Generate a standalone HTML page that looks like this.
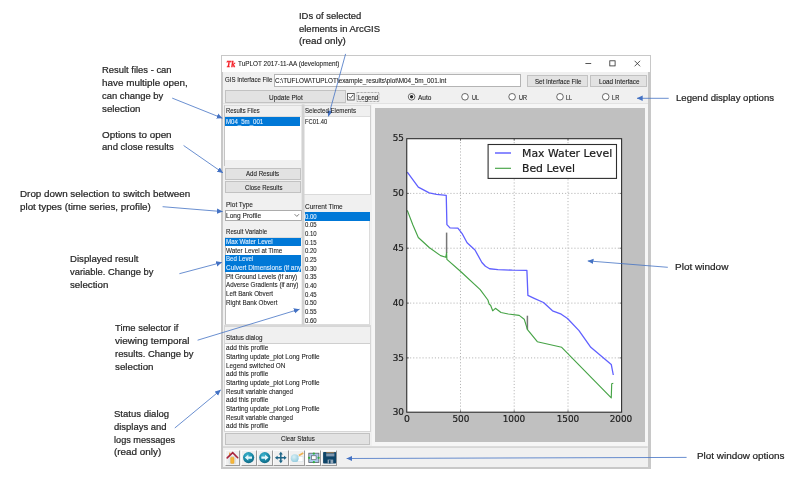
<!DOCTYPE html>
<html lang="en">
<head>
<meta charset="utf-8">
<title>TuPLOT interface overview</title>
<style>
html,body{margin:0;padding:0;background:#fff;}
body{width:800px;height:480px;position:relative;overflow:hidden;font-family:'Liberation Sans',sans-serif;}
.b{position:absolute;box-sizing:border-box;}
.t{position:absolute;white-space:nowrap;transform-origin:0 50%;}
.btn{background:#e2e2e2;border:1px solid #c2c2c2;}
.white{background:#fff;}
.sel{background:#0078d7;}
.tb{background:#f0f0f0;border-top:1px solid #fbfbfb;border-left:1px solid #fbfbfb;border-right:1px solid #999;border-bottom:1px solid #999;}
svg{position:absolute;left:0;top:0;overflow:visible;}
</style>
</head>
<body>
<div id="stage" style="position:absolute;left:0;top:0;width:800px;height:480px;will-change:transform;">
<!-- window frame -->
<div class="b" style="left:221.2px;top:55.2px;width:429.4px;height:413.4px;background:#c8c8c8;"></div>
<div class="b" style="left:222px;top:56px;width:427.8px;height:16.2px;background:#fff;"></div>
<div class="b" style="left:223px;top:72.2px;width:424.7px;height:394.4px;background:#f0f0f0;"></div>

<!-- row 1 -->
<div class="b white" style="left:273.6px;top:74.3px;width:247.4px;height:13px;border:1px solid #b4b4b4;"></div>
<div class="b btn" style="left:527px;top:75px;width:61px;height:12px;"></div>
<div class="b btn" style="left:590px;top:75px;width:57px;height:12px;"></div>
<!-- row 2 -->
<div class="b btn" style="left:224.5px;top:90.4px;width:121px;height:13px;"></div>
<div class="b" style="left:223px;top:103.4px;width:424.7px;height:1px;background:#e2e2e2;"></div>

<!-- left panels -->
<div class="b" style="left:224.4px;top:105.2px;width:77.2px;height:61px;border:1px solid #dadada;border-right:none;border-left-color:#c4c4c4;border-bottom:none;"></div>
<div class="b white" style="left:225px;top:116.2px;width:75.8px;height:44px;border-top:1px solid #dcdcdc;"></div>
<div class="b sel" style="left:225px;top:117px;width:75px;height:8.6px;"></div>
<div class="b" style="left:304px;top:105.2px;width:66.8px;height:89.6px;border:1px solid #dadada;border-left:none;border-right-color:#cfcfcf;"></div>
<div class="b white" style="left:304px;top:116.2px;width:65.8px;height:78px;border-top:1px solid #dcdcdc;"></div>
<div class="b btn" style="left:225px;top:167.5px;width:76.2px;height:12px;"></div>
<div class="b btn" style="left:225px;top:181.2px;width:76.2px;height:12px;"></div>
<!-- combobox -->
<div class="b white" style="left:224.5px;top:210px;width:77px;height:10.6px;border:1px solid #acacac;"></div>
<!-- result variable list -->
<div class="b white" style="left:224.5px;top:237.3px;width:77.5px;height:87.6px;border:1px solid #dcdcdc;border-left-color:#bdbdbd;border-right:none;"></div>
<div class="b sel" style="left:225.2px;top:237.5px;width:75.4px;height:8.6px;"></div>
<div class="b sel" style="left:225.2px;top:254.8px;width:75.4px;height:17.3px;"></div>
<!-- time list -->
<div class="b white" style="left:304px;top:211.6px;width:66.4px;height:113px;border:1px solid #dcdcdc;border-left:none;"></div>
<div class="b sel" style="left:304.6px;top:212px;width:65px;height:8.6px;"></div>
<div class="b" style="left:224.4px;top:324.6px;width:146.4px;height:1.9px;background:#d8d8d8;"></div>
<!-- status -->
<div class="b" style="left:224.4px;top:326.2px;width:146.4px;height:106px;border:1px solid #d6d6d6;"></div>
<div class="b white" style="left:225px;top:343.3px;width:145px;height:88px;border-top:1px solid #cfcfcf;"></div>
<div class="b btn" style="left:225px;top:433px;width:145.4px;height:12px;"></div>
<!-- toolbar -->
<div class="b tb" style="left:224.6px;top:449.6px;width:15.9px;height:16px;"></div>
<div class="b tb" style="left:240.7px;top:449.6px;width:15.9px;height:16px;"></div>
<div class="b tb" style="left:256.8px;top:449.6px;width:15.9px;height:16px;"></div>
<div class="b tb" style="left:272.9px;top:449.6px;width:15.9px;height:16px;"></div>
<div class="b tb" style="left:289px;top:449.6px;width:15.9px;height:16px;"></div>
<div class="b tb" style="left:305.1px;top:449.6px;width:15.9px;height:16px;background:#fff;"></div>
<div class="b tb" style="left:321.2px;top:449.6px;width:15.9px;height:16px;"></div>

<!-- plot canvas -->
<div class="b" style="left:371.7px;top:104.4px;width:276px;height:341.6px;background:#f6f6f6;"></div>
<div class="b" style="left:375px;top:108px;width:270px;height:334.4px;background:#c0c0c0;"></div>
<div class="b white" style="left:406.8px;top:138.6px;width:214.9px;height:273.8px;"></div>

<svg width="800" height="480" viewBox="0 0 800 480">
<rect x="223" y="446.3" width="424.7" height="1.5" fill="#d2d2d2"/>
<rect x="301.7" y="104.4" width="2.8" height="221" fill="#d2d2d2"/>
<!-- window controls -->
<g stroke="#2b2b2b" stroke-width="0.8" fill="none">
<line x1="585.4" y1="63.5" x2="591.2" y2="63.5"/>
<rect x="609.8" y="60.8" width="5.3" height="5.1"/>
<path d="M634.6 60.8 L640.1 66.3 M640.1 60.8 L634.6 66.3"/>
</g>
<!-- Tk icon -->
<text x="226.3" y="66.9" font-family="'Liberation Serif', serif" font-style="italic" font-weight="bold" font-size="9.2" fill="#f41c24" stroke="#f41c24" stroke-width="0.35" textLength="8.8" lengthAdjust="spacingAndGlyphs">Tk</text>
<!-- checkbox -->
<rect x="347.6" y="93.4" width="6.6" height="6.6" fill="#fff" stroke="#3a3a3a" stroke-width="0.8"/>
<path d="M348.9 96.6 L350.4 98.3 L353.1 94.9" fill="none" stroke="#2a2a2a" stroke-width="0.8"/>
<rect x="356.9" y="92.5" width="22" height="9" fill="none" stroke="#555" stroke-width="0.6" stroke-dasharray="0.7 0.7"/>
<!-- radios -->
<g fill="#fff" stroke="#3a3a3a" stroke-width="0.75">
<circle cx="411.6" cy="96.8" r="3.3"/>
<circle cx="465" cy="96.8" r="3.3"/>
<circle cx="512.1" cy="96.8" r="3.3"/>
<circle cx="560" cy="96.8" r="3.3"/>
<circle cx="605.7" cy="96.8" r="3.3"/>
</g>
<circle cx="411.6" cy="96.8" r="1.7" fill="#2a2a2a"/>
<!-- combobox chevron -->
<path d="M294.6 214.2 L296.8 216.4 L299 214.2" fill="none" stroke="#444" stroke-width="0.7"/>

<!-- plot: grid -->
<g stroke="#b4b4b4" stroke-width="1" stroke-dasharray="1.1 2" fill="none">
<line x1="460.5" y1="139" x2="460.5" y2="412"/>
<line x1="514.2" y1="139" x2="514.2" y2="412"/>
<line x1="568" y1="139" x2="568" y2="412"/>
<line x1="407" y1="193.4" x2="621.5" y2="193.4"/>
<line x1="407" y1="248.2" x2="621.5" y2="248.2"/>
<line x1="407" y1="303.1" x2="621.5" y2="303.1"/>
<line x1="407" y1="357.9" x2="621.5" y2="357.9"/>
</g>
<!-- culverts -->
<g stroke="#777" stroke-width="1.5" fill="none">
<line x1="446.6" y1="232.6" x2="446.6" y2="253"/>
<line x1="527.4" y1="315.7" x2="527.4" y2="329.5"/>
</g>
<!-- curves -->
<polyline fill="none" stroke="#6060ff" stroke-width="1.3" stroke-linejoin="round" points="407.3,172.1 418.3,187.1 429.2,192.9 436.5,194.4 446.25,195.4 446.9,224.6 450,227.9 457.9,228.2 462.5,234.2 467.1,242.7 475,250 481.9,262.5 485.4,266.25 489.6,268.75 497.9,269.6 512.5,270.2 526.9,270.4 527.9,295.4 534.2,298.3 543.5,302.5 552.5,310.8 561.25,314.2 567.5,318.5 579,330.6 590.8,347.3 611.25,364.4 613.3,375"/>
<polyline fill="none" stroke="#46a346" stroke-width="1.15" stroke-linejoin="round" points="407.3,210.4 412.9,225 418.3,237.5 429.2,247.5 440.6,255.6 445.8,257.3 446.6,252.5 446.9,259.4 460.4,271.25 480.2,289.6 487.9,300 489.2,304.2 490.6,305.2 492.7,310.8 495.4,308.3 501,312.5 508.3,314 519.2,315.4 524.2,319.2 527.5,329.6 537.3,341.7 561.7,347.3 611.25,397.9 611.7,383.75 613.3,383.3"/>
<!-- axes frame -->
<rect x="406.75" y="138.7" width="214.85" height="273.5" fill="none" stroke="#2e2e2e" stroke-width="1.1"/>
<!-- ticks -->
<g stroke="#333" stroke-width="0.6">
<path d="M460.5 412.4v-2.2M514.2 412.4v-2.2M568 412.4v-2.2M460.5 138.6v2.2M514.2 138.6v2.2M568 138.6v2.2"/>
<path d="M406.8 193.4h2.2M406.8 248.2h2.2M406.8 303.1h2.2M406.8 357.9h2.2M621.7 193.4h-2.2M621.7 248.2h-2.2M621.7 303.1h-2.2M621.7 357.9h-2.2"/>
</g>
<!-- legend -->
<rect x="488.1" y="144.5" width="128.4" height="33.9" fill="#fff" stroke="#2e2e2e" stroke-width="1.1"/>
<line x1="495" y1="153" x2="511" y2="153" stroke="#6464ff" stroke-width="1.5"/>
<line x1="495" y1="168.3" x2="511" y2="168.3" stroke="#46a346" stroke-width="1.15"/>

<!-- annotation arrows -->
<defs>
<marker id="ah" markerWidth="8" markerHeight="6" refX="5.7" refY="3" orient="auto" markerUnits="userSpaceOnUse">
<path d="M0 0.3 L5.9 3 L0 5.7 Z" fill="#4472c4"/>
</marker>
</defs>
<g stroke="#4472c4" stroke-width="0.8" fill="none" marker-end="url(#ah)">
<line x1="172.2" y1="98.1" x2="222.4" y2="118.2"/>
<line x1="183.6" y1="145.5" x2="222.9" y2="172.8"/>
<line x1="162.6" y1="206.7" x2="222.6" y2="211.6"/>
<line x1="179.4" y1="273.7" x2="221.9" y2="262.4"/>
<line x1="197.6" y1="340.2" x2="299.5" y2="309.2"/>
<line x1="174.8" y1="428" x2="220.7" y2="390"/>
<line x1="345.6" y1="53.9" x2="328.4" y2="116.4"/>
<line x1="668.7" y1="98.3" x2="637" y2="98.3"/>
<line x1="667.8" y1="267.3" x2="587.8" y2="260.9"/>
<line x1="686.6" y1="457.4" x2="346.7" y2="458.5"/>
</g>
<!-- toolbar icons -->
<defs>
<radialGradient id="tg" cx="0.4" cy="0.3" r="0.75">
<stop offset="0" stop-color="#3fb6cf"/><stop offset="0.55" stop-color="#1a8aa8"/><stop offset="1" stop-color="#11657f"/>
</radialGradient>
<radialGradient id="zg" cx="0.4" cy="0.35" r="0.7">
<stop offset="0" stop-color="#d8f0f6"/><stop offset="1" stop-color="#8cc8dc"/>
</radialGradient>
</defs>
<!-- home -->
<rect x="229" y="456.4" width="6.8" height="7.2" fill="#e8eaec" stroke="#c8d0d4" stroke-width="0.4"/>
<rect x="230.6" y="457.2" width="3.5" height="6.2" rx="0.7" fill="#f6b83c" stroke="#e09a24" stroke-width="0.4"/>
<rect x="229" y="452.6" width="1.4" height="2.6" fill="#f0a848"/>
<path d="M227.2 457.9 L232.7 452.7 L237.7 457.7" fill="none" stroke="#a8233d" stroke-width="1.6" stroke-linejoin="miter" stroke-linecap="round"/>
<!-- back -->
<circle cx="248.6" cy="457.6" r="5.6" fill="url(#tg)"/>
<path d="M244.8 457.6 L248.3 454.7 L248.3 456.5 L252 456.5 L252 458.7 L248.3 458.7 L248.3 460.5 Z" fill="#e6f6fa"/>
<!-- forward -->
<circle cx="264.75" cy="457.6" r="5.6" fill="url(#tg)"/>
<path d="M268.55 457.6 L265.05 454.7 L265.05 456.5 L261.35 456.5 L261.35 458.7 L265.05 458.7 L265.05 460.5 Z" fill="#e6f6fa"/>
<!-- move -->
<g fill="#1f6688" stroke="none">
<rect x="276.6" y="457" width="8.4" height="1.5"/>
<rect x="280.05" y="453.4" width="1.5" height="8.4"/>
<path d="M274.9 457.75 L277.6 455.7 L277.6 459.8 Z"/>
<path d="M286.7 457.75 L284 455.7 L284 459.8 Z"/>
<path d="M280.8 451.8 L278.75 454.5 L282.85 454.5 Z"/>
<path d="M280.8 463.2 L278.75 460.5 L282.85 460.5 Z"/>
</g>
<!-- zoom -->
<rect x="297.6" y="456.6" width="5.4" height="5.2" fill="#fff" stroke="#c8d4dc" stroke-width="0.4"/>
<circle cx="294.75" cy="458.15" r="3.9" fill="url(#zg)" opacity="0.95"/>
<path d="M298.9 455.4 L303.3 452.9" stroke="#f0b252" stroke-width="1.7" fill="none"/>
<!-- subplots -->
<rect x="308.8" y="453.2" width="10.1" height="9.3" fill="#a9c8e8" stroke="#5a6068" stroke-width="0.8"/>
<rect x="311.6" y="455.8" width="4.5" height="3.9" fill="#fff" stroke="#4a5058" stroke-width="0.6"/>
<g fill="#2eb03e"><circle cx="313.85" cy="453.6" r="1.15"/><circle cx="313.85" cy="462.2" r="1.15"/><circle cx="309.1" cy="457.8" r="1.15"/><circle cx="318.6" cy="457.8" r="1.15"/></g>
<!-- save -->
<rect x="323.1" y="451.9" width="13" height="11.7" rx="0.8" fill="#0e4468"/>
<rect x="326.2" y="453.5" width="8.2" height="2.9" fill="#7f97ae"/>
<rect x="326.2" y="452.3" width="8.2" height="0.8" fill="#c08a50"/>
<rect x="327.6" y="459.6" width="5.6" height="4" fill="#93a7b8"/>
<rect x="329" y="460.2" width="1.5" height="3.2" fill="#0e4468"/>

</svg>
<span id="t0" class="t" style="-webkit-text-stroke:0.22px;left:102.2px;top:65.00px;font-size:9.5px;line-height:9.5px;color:#262626;font-family:'Liberation Sans', sans-serif;transform:scaleX(0.9910);">Result files - can</span>
<span id="t1" class="t" style="-webkit-text-stroke:0.22px;left:102.2px;top:78.00px;font-size:9.5px;line-height:9.5px;color:#262626;font-family:'Liberation Sans', sans-serif;transform:scaleX(1.0402);">have multiple open,</span>
<span id="t2" class="t" style="-webkit-text-stroke:0.22px;left:102.2px;top:91.00px;font-size:9.5px;line-height:9.5px;color:#262626;font-family:'Liberation Sans', sans-serif;transform:scaleX(0.9903);">can change by</span>
<span id="t3" class="t" style="-webkit-text-stroke:0.22px;left:102.2px;top:104.00px;font-size:9.5px;line-height:9.5px;color:#262626;font-family:'Liberation Sans', sans-serif;transform:scaleX(1.0267);">selection</span>
<span id="t4" class="t" style="-webkit-text-stroke:0.22px;left:102.2px;top:130.00px;font-size:9.5px;line-height:9.5px;color:#262626;font-family:'Liberation Sans', sans-serif;transform:scaleX(1.0376);">Options to open</span>
<span id="t5" class="t" style="-webkit-text-stroke:0.22px;left:102.2px;top:142.00px;font-size:9.5px;line-height:9.5px;color:#262626;font-family:'Liberation Sans', sans-serif;transform:scaleX(1.0057);">and close results</span>
<span id="t6" class="t" style="-webkit-text-stroke:0.22px;left:19.85px;top:189.00px;font-size:9.5px;line-height:9.5px;color:#262626;font-family:'Liberation Sans', sans-serif;transform:scaleX(1.0363);">Drop down selection to switch between</span>
<span id="t7" class="t" style="-webkit-text-stroke:0.22px;left:19.85px;top:202.00px;font-size:9.5px;line-height:9.5px;color:#262626;font-family:'Liberation Sans', sans-serif;transform:scaleX(1.0322);">plot types (time series, profile)</span>
<span id="t8" class="t" style="-webkit-text-stroke:0.22px;left:70.0px;top:254.00px;font-size:9.5px;line-height:9.5px;color:#262626;font-family:'Liberation Sans', sans-serif;transform:scaleX(1.0134);">Displayed result</span>
<span id="t9" class="t" style="-webkit-text-stroke:0.22px;left:70.0px;top:267.00px;font-size:9.5px;line-height:9.5px;color:#262626;font-family:'Liberation Sans', sans-serif;transform:scaleX(0.9870);">variable. Change by</span>
<span id="t10" class="t" style="-webkit-text-stroke:0.22px;left:70.0px;top:280.00px;font-size:9.5px;line-height:9.5px;color:#262626;font-family:'Liberation Sans', sans-serif;transform:scaleX(1.0213);">selection</span>
<span id="t11" class="t" style="-webkit-text-stroke:0.22px;left:115.15px;top:323.00px;font-size:9.5px;line-height:9.5px;color:#262626;font-family:'Liberation Sans', sans-serif;transform:scaleX(0.9912);">Time selector if</span>
<span id="t12" class="t" style="-webkit-text-stroke:0.22px;left:115.15px;top:336.00px;font-size:9.5px;line-height:9.5px;color:#262626;font-family:'Liberation Sans', sans-serif;transform:scaleX(1.0449);">viewing temporal</span>
<span id="t13" class="t" style="-webkit-text-stroke:0.22px;left:115.15px;top:349.00px;font-size:9.5px;line-height:9.5px;color:#262626;font-family:'Liberation Sans', sans-serif;transform:scaleX(0.9909);">results. Change by</span>
<span id="t14" class="t" style="-webkit-text-stroke:0.22px;left:115.15px;top:362.00px;font-size:9.5px;line-height:9.5px;color:#262626;font-family:'Liberation Sans', sans-serif;transform:scaleX(1.0267);">selection</span>
<span id="t15" class="t" style="-webkit-text-stroke:0.22px;left:114.4px;top:409.00px;font-size:9.5px;line-height:9.5px;color:#262626;font-family:'Liberation Sans', sans-serif;transform:scaleX(1.0030);">Status dialog</span>
<span id="t16" class="t" style="-webkit-text-stroke:0.22px;left:114.4px;top:422.00px;font-size:9.5px;line-height:9.5px;color:#262626;font-family:'Liberation Sans', sans-serif;transform:scaleX(0.9941);">displays and</span>
<span id="t17" class="t" style="-webkit-text-stroke:0.22px;left:114.4px;top:435.00px;font-size:9.5px;line-height:9.5px;color:#262626;font-family:'Liberation Sans', sans-serif;transform:scaleX(0.9641);">logs messages</span>
<span id="t18" class="t" style="-webkit-text-stroke:0.22px;left:114.4px;top:447.00px;font-size:9.5px;line-height:9.5px;color:#262626;font-family:'Liberation Sans', sans-serif;transform:scaleX(1.0391);">(read only)</span>
<span id="t19" class="t" style="-webkit-text-stroke:0.22px;left:299.4px;top:11.00px;font-size:9.5px;line-height:9.5px;color:#262626;font-family:'Liberation Sans', sans-serif;transform:scaleX(0.9913);">IDs of selected</span>
<span id="t20" class="t" style="-webkit-text-stroke:0.22px;left:299.4px;top:24.00px;font-size:9.5px;line-height:9.5px;color:#262626;font-family:'Liberation Sans', sans-serif;transform:scaleX(0.9962);">elements in ArcGIS</span>
<span id="t21" class="t" style="-webkit-text-stroke:0.22px;left:299.4px;top:36.00px;font-size:9.5px;line-height:9.5px;color:#262626;font-family:'Liberation Sans', sans-serif;transform:scaleX(1.0325);">(read only)</span>
<span id="t22" class="t" style="-webkit-text-stroke:0.22px;left:675.7px;top:93.00px;font-size:9.5px;line-height:9.5px;color:#262626;font-family:'Liberation Sans', sans-serif;transform:scaleX(1.0084);">Legend display options</span>
<span id="t23" class="t" style="-webkit-text-stroke:0.22px;left:675.2px;top:262.00px;font-size:9.5px;line-height:9.5px;color:#262626;font-family:'Liberation Sans', sans-serif;transform:scaleX(1.0532);">Plot window</span>
<span id="t24" class="t" style="-webkit-text-stroke:0.22px;left:696.6px;top:451.00px;font-size:9.5px;line-height:9.5px;color:#262626;font-family:'Liberation Sans', sans-serif;transform:scaleX(1.0421);">Plot window options</span>
<span id="t25" class="t" style="-webkit-text-stroke:0.1px;left:238.2px;top:60.00px;font-size:7.6px;line-height:7.6px;color:#1c1c1c;font-family:'Liberation Sans', sans-serif;transform:scaleX(0.8417);">TuPLOT 2017-11-AA (development)</span>
<span id="t26" class="t" style="-webkit-text-stroke:0.1px;left:225.2px;top:76.00px;font-size:7.6px;line-height:7.6px;color:#1c1c1c;font-family:'Liberation Sans', sans-serif;transform:scaleX(0.8004);">GIS Interface File</span>
<span id="t27" class="t" style="-webkit-text-stroke:0.1px;left:275px;top:77.00px;font-size:7.6px;line-height:7.6px;color:#1c1c1c;font-family:'Liberation Sans', sans-serif;transform:scaleX(0.8381);">C:\TUFLOW\TUPLOT\example_results\plot\M04_5m_001.int</span>
<span id="t28" class="t" style="-webkit-text-stroke:0.1px;left:535px;top:78.00px;font-size:7.6px;line-height:7.6px;color:#1c1c1c;font-family:'Liberation Sans', sans-serif;transform:scaleX(0.8100);">Set Interface File</span>
<span id="t29" class="t" style="-webkit-text-stroke:0.1px;left:598.7px;top:78.00px;font-size:7.6px;line-height:7.6px;color:#1c1c1c;font-family:'Liberation Sans', sans-serif;transform:scaleX(0.8340);">Load Interface</span>
<span id="t30" class="t" style="-webkit-text-stroke:0.1px;left:268.5px;top:94.00px;font-size:7.6px;line-height:7.6px;color:#1c1c1c;font-family:'Liberation Sans', sans-serif;transform:scaleX(0.8491);">Update Plot</span>
<span id="t31" class="t" style="-webkit-text-stroke:0.1px;left:357.8px;top:94.00px;font-size:7.6px;line-height:7.6px;color:#1c1c1c;font-family:'Liberation Sans', sans-serif;transform:scaleX(0.7970);">Legend</span>
<span id="t32" class="t" style="-webkit-text-stroke:0.1px;left:418.2px;top:94.00px;font-size:7.6px;line-height:7.6px;color:#1c1c1c;font-family:'Liberation Sans', sans-serif;transform:scaleX(0.8576);">Auto</span>
<span id="t33" class="t" style="-webkit-text-stroke:0.1px;left:471.5px;top:94.00px;font-size:7.6px;line-height:7.6px;color:#1c1c1c;font-family:'Liberation Sans', sans-serif;transform:scaleX(0.7203);">UL</span>
<span id="t34" class="t" style="-webkit-text-stroke:0.1px;left:518.6px;top:94.00px;font-size:7.6px;line-height:7.6px;color:#1c1c1c;font-family:'Liberation Sans', sans-serif;transform:scaleX(0.7293);">UR</span>
<span id="t35" class="t" style="-webkit-text-stroke:0.1px;left:566.25px;top:94.00px;font-size:7.6px;line-height:7.6px;color:#1c1c1c;font-family:'Liberation Sans', sans-serif;transform:scaleX(0.7335);">LL</span>
<span id="t36" class="t" style="-webkit-text-stroke:0.1px;left:611.85px;top:94.00px;font-size:7.6px;line-height:7.6px;color:#1c1c1c;font-family:'Liberation Sans', sans-serif;transform:scaleX(0.7511);">LR</span>
<span id="t37" class="t" style="-webkit-text-stroke:0.1px;left:225.75px;top:107.00px;font-size:7.6px;line-height:7.6px;color:#1c1c1c;font-family:'Liberation Sans', sans-serif;transform:scaleX(0.7753);">Results Files</span>
<span id="t38" class="t" style="-webkit-text-stroke:0.1px;left:305px;top:107.00px;font-size:7.6px;line-height:7.6px;color:#1c1c1c;font-family:'Liberation Sans', sans-serif;transform:scaleX(0.8045);">Selected Elements</span>
<span id="t39" class="t" style="-webkit-text-stroke:0.1px;left:225.75px;top:118.00px;font-size:7.6px;line-height:7.6px;color:#e6f2ff;font-family:'Liberation Sans', sans-serif;transform:scaleX(0.8008);">M04_5m_001</span>
<span id="t40" class="t" style="-webkit-text-stroke:0.1px;left:305px;top:118.00px;font-size:7.6px;line-height:7.6px;color:#1c1c1c;font-family:'Liberation Sans', sans-serif;transform:scaleX(0.7618);">FC01.40</span>
<span id="t41" class="t" style="-webkit-text-stroke:0.1px;left:246.25px;top:170.00px;font-size:7.6px;line-height:7.6px;color:#1c1c1c;font-family:'Liberation Sans', sans-serif;transform:scaleX(0.8107);">Add Results</span>
<span id="t42" class="t" style="-webkit-text-stroke:0.1px;left:244.5px;top:184.00px;font-size:7.6px;line-height:7.6px;color:#1c1c1c;font-family:'Liberation Sans', sans-serif;transform:scaleX(0.7992);">Close Results</span>
<span id="t43" class="t" style="-webkit-text-stroke:0.1px;left:225.75px;top:201.00px;font-size:7.6px;line-height:7.6px;color:#1c1c1c;font-family:'Liberation Sans', sans-serif;transform:scaleX(0.8547);">Plot Type</span>
<span id="t44" class="t" style="-webkit-text-stroke:0.1px;left:225.75px;top:212.00px;font-size:7.6px;line-height:7.6px;color:#1c1c1c;font-family:'Liberation Sans', sans-serif;transform:scaleX(0.8685);">Long Profile</span>
<span id="t45" class="t" style="-webkit-text-stroke:0.1px;left:305px;top:203.00px;font-size:7.6px;line-height:7.6px;color:#1c1c1c;font-family:'Liberation Sans', sans-serif;transform:scaleX(0.8590);">Current Time</span>
<span id="t46" class="t" style="-webkit-text-stroke:0.1px;left:225.75px;top:228.00px;font-size:7.6px;line-height:7.6px;color:#1c1c1c;font-family:'Liberation Sans', sans-serif;transform:scaleX(0.8088);">Result Variable</span>
<span id="t47" class="t" style="-webkit-text-stroke:0.1px;left:225.75px;top:238.00px;font-size:7.6px;line-height:7.6px;color:#e6f2ff;font-family:'Liberation Sans', sans-serif;transform:scaleX(0.8218);">Max Water Level</span>
<span id="t48" class="t" style="-webkit-text-stroke:0.1px;left:225.75px;top:247.00px;font-size:7.6px;line-height:7.6px;color:#1c1c1c;font-family:'Liberation Sans', sans-serif;transform:scaleX(0.8357);">Water Level at Time</span>
<span id="t49" class="t" style="-webkit-text-stroke:0.1px;left:225.75px;top:255.00px;font-size:7.6px;line-height:7.6px;color:#e6f2ff;font-family:'Liberation Sans', sans-serif;transform:scaleX(0.8052);">Bed Level</span>
<span id="t50" class="t" style="-webkit-text-stroke:0.1px;left:225.75px;top:264.00px;font-size:7.6px;line-height:7.6px;color:#e6f2ff;font-family:'Liberation Sans', sans-serif;transform:scaleX(0.8485);">Culvert Dimensions (if any</span>
<span id="t51" class="t" style="-webkit-text-stroke:0.1px;left:225.75px;top:273.00px;font-size:7.6px;line-height:7.6px;color:#1c1c1c;font-family:'Liberation Sans', sans-serif;transform:scaleX(0.8309);">Pit Ground Levels (if any)</span>
<span id="t52" class="t" style="-webkit-text-stroke:0.1px;left:225.75px;top:281.00px;font-size:7.6px;line-height:7.6px;color:#1c1c1c;font-family:'Liberation Sans', sans-serif;transform:scaleX(0.8213);">Adverse Gradients (if any)</span>
<span id="t53" class="t" style="-webkit-text-stroke:0.1px;left:225.75px;top:290.00px;font-size:7.6px;line-height:7.6px;color:#1c1c1c;font-family:'Liberation Sans', sans-serif;transform:scaleX(0.8239);">Left Bank Obvert</span>
<span id="t54" class="t" style="-webkit-text-stroke:0.1px;left:225.75px;top:299.00px;font-size:7.6px;line-height:7.6px;color:#1c1c1c;font-family:'Liberation Sans', sans-serif;transform:scaleX(0.8292);">Right Bank Obvert</span>
<span id="t55" class="t" style="-webkit-text-stroke:0.1px;left:305px;top:213.00px;font-size:7.6px;line-height:7.6px;color:#e6f2ff;font-family:'Liberation Sans', sans-serif;transform:scaleX(0.7915);">0.00</span>
<span id="t56" class="t" style="-webkit-text-stroke:0.1px;left:305px;top:221.00px;font-size:7.6px;line-height:7.6px;color:#1c1c1c;font-family:'Liberation Sans', sans-serif;transform:scaleX(0.7915);">0.05</span>
<span id="t57" class="t" style="-webkit-text-stroke:0.1px;left:305px;top:230.00px;font-size:7.6px;line-height:7.6px;color:#1c1c1c;font-family:'Liberation Sans', sans-serif;transform:scaleX(0.7915);">0.10</span>
<span id="t58" class="t" style="-webkit-text-stroke:0.1px;left:305px;top:239.00px;font-size:7.6px;line-height:7.6px;color:#1c1c1c;font-family:'Liberation Sans', sans-serif;transform:scaleX(0.7915);">0.15</span>
<span id="t59" class="t" style="-webkit-text-stroke:0.1px;left:305px;top:247.00px;font-size:7.6px;line-height:7.6px;color:#1c1c1c;font-family:'Liberation Sans', sans-serif;transform:scaleX(0.7915);">0.20</span>
<span id="t60" class="t" style="-webkit-text-stroke:0.1px;left:305px;top:256.00px;font-size:7.6px;line-height:7.6px;color:#1c1c1c;font-family:'Liberation Sans', sans-serif;transform:scaleX(0.7915);">0.25</span>
<span id="t61" class="t" style="-webkit-text-stroke:0.1px;left:305px;top:265.00px;font-size:7.6px;line-height:7.6px;color:#1c1c1c;font-family:'Liberation Sans', sans-serif;transform:scaleX(0.7915);">0.30</span>
<span id="t62" class="t" style="-webkit-text-stroke:0.1px;left:305px;top:273.00px;font-size:7.6px;line-height:7.6px;color:#1c1c1c;font-family:'Liberation Sans', sans-serif;transform:scaleX(0.7915);">0.35</span>
<span id="t63" class="t" style="-webkit-text-stroke:0.1px;left:305px;top:282.00px;font-size:7.6px;line-height:7.6px;color:#1c1c1c;font-family:'Liberation Sans', sans-serif;transform:scaleX(0.7915);">0.40</span>
<span id="t64" class="t" style="-webkit-text-stroke:0.1px;left:305px;top:291.00px;font-size:7.6px;line-height:7.6px;color:#1c1c1c;font-family:'Liberation Sans', sans-serif;transform:scaleX(0.7915);">0.45</span>
<span id="t65" class="t" style="-webkit-text-stroke:0.1px;left:305px;top:299.00px;font-size:7.6px;line-height:7.6px;color:#1c1c1c;font-family:'Liberation Sans', sans-serif;transform:scaleX(0.7915);">0.50</span>
<span id="t66" class="t" style="-webkit-text-stroke:0.1px;left:305px;top:308.00px;font-size:7.6px;line-height:7.6px;color:#1c1c1c;font-family:'Liberation Sans', sans-serif;transform:scaleX(0.7915);">0.55</span>
<span id="t67" class="t" style="-webkit-text-stroke:0.1px;left:305px;top:317.00px;font-size:7.6px;line-height:7.6px;color:#1c1c1c;font-family:'Liberation Sans', sans-serif;transform:scaleX(0.7915);">0.60</span>
<span id="t68" class="t" style="-webkit-text-stroke:0.1px;left:225.75px;top:334.00px;font-size:7.6px;line-height:7.6px;color:#1c1c1c;font-family:'Liberation Sans', sans-serif;transform:scaleX(0.8302);">Status dialog</span>
<span id="t69" class="t" style="-webkit-text-stroke:0.1px;left:225.75px;top:344.00px;font-size:7.6px;line-height:7.6px;color:#1c1c1c;font-family:'Liberation Sans', sans-serif;transform:scaleX(0.8595);">add this profile</span>
<span id="t70" class="t" style="-webkit-text-stroke:0.1px;left:225.75px;top:353.00px;font-size:7.6px;line-height:7.6px;color:#1c1c1c;font-family:'Liberation Sans', sans-serif;transform:scaleX(0.8470);">Starting update_plot Long Profile</span>
<span id="t71" class="t" style="-webkit-text-stroke:0.1px;left:225.75px;top:362.00px;font-size:7.6px;line-height:7.6px;color:#1c1c1c;font-family:'Liberation Sans', sans-serif;transform:scaleX(0.8433);">Legend switched ON</span>
<span id="t72" class="t" style="-webkit-text-stroke:0.1px;left:225.75px;top:370.00px;font-size:7.6px;line-height:7.6px;color:#1c1c1c;font-family:'Liberation Sans', sans-serif;transform:scaleX(0.8595);">add this profile</span>
<span id="t73" class="t" style="-webkit-text-stroke:0.1px;left:225.75px;top:379.00px;font-size:7.6px;line-height:7.6px;color:#1c1c1c;font-family:'Liberation Sans', sans-serif;transform:scaleX(0.8470);">Starting update_plot Long Profile</span>
<span id="t74" class="t" style="-webkit-text-stroke:0.1px;left:225.75px;top:388.00px;font-size:7.6px;line-height:7.6px;color:#1c1c1c;font-family:'Liberation Sans', sans-serif;transform:scaleX(0.8216);">Result variable changed</span>
<span id="t75" class="t" style="-webkit-text-stroke:0.1px;left:225.75px;top:396.00px;font-size:7.6px;line-height:7.6px;color:#1c1c1c;font-family:'Liberation Sans', sans-serif;transform:scaleX(0.8595);">add this profile</span>
<span id="t76" class="t" style="-webkit-text-stroke:0.1px;left:225.75px;top:405.00px;font-size:7.6px;line-height:7.6px;color:#1c1c1c;font-family:'Liberation Sans', sans-serif;transform:scaleX(0.8470);">Starting update_plot Long Profile</span>
<span id="t77" class="t" style="-webkit-text-stroke:0.1px;left:225.75px;top:414.00px;font-size:7.6px;line-height:7.6px;color:#1c1c1c;font-family:'Liberation Sans', sans-serif;transform:scaleX(0.8216);">Result variable changed</span>
<span id="t78" class="t" style="-webkit-text-stroke:0.1px;left:225.75px;top:422.00px;font-size:7.6px;line-height:7.6px;color:#1c1c1c;font-family:'Liberation Sans', sans-serif;transform:scaleX(0.8595);">add this profile</span>
<span id="t79" class="t" style="-webkit-text-stroke:0.1px;left:280.75px;top:435.00px;font-size:7.6px;line-height:7.6px;color:#1c1c1c;font-family:'Liberation Sans', sans-serif;transform:scaleX(0.8063);">Clear Status</span>
<span id="t80" class="t" style="-webkit-text-stroke:0.2px;left:391.76px;top:133.00px;font-size:9.4px;line-height:9.4px;color:#1a1a1a;font-family:'DejaVu Sans', sans-serif;transform-origin:100% 50%;transform:scaleX(0.9466);">55</span>
<span id="t81" class="t" style="-webkit-text-stroke:0.2px;left:391.76px;top:188.00px;font-size:9.4px;line-height:9.4px;color:#1a1a1a;font-family:'DejaVu Sans', sans-serif;transform-origin:100% 50%;transform:scaleX(0.9466);">50</span>
<span id="t82" class="t" style="-webkit-text-stroke:0.2px;left:391.76px;top:243.00px;font-size:9.4px;line-height:9.4px;color:#1a1a1a;font-family:'DejaVu Sans', sans-serif;transform-origin:100% 50%;transform:scaleX(0.9466);">45</span>
<span id="t83" class="t" style="-webkit-text-stroke:0.2px;left:391.76px;top:298.00px;font-size:9.4px;line-height:9.4px;color:#1a1a1a;font-family:'DejaVu Sans', sans-serif;transform-origin:100% 50%;transform:scaleX(0.9466);">40</span>
<span id="t84" class="t" style="-webkit-text-stroke:0.2px;left:391.76px;top:353.00px;font-size:9.4px;line-height:9.4px;color:#1a1a1a;font-family:'DejaVu Sans', sans-serif;transform-origin:100% 50%;transform:scaleX(0.9466);">35</span>
<span id="t85" class="t" style="-webkit-text-stroke:0.2px;left:391.76px;top:407.00px;font-size:9.4px;line-height:9.4px;color:#1a1a1a;font-family:'DejaVu Sans', sans-serif;transform-origin:100% 50%;transform:scaleX(0.9466);">30</span>
<span id="t86" class="t" style="-webkit-text-stroke:0.2px;left:403.92px;top:414.00px;font-size:9.4px;line-height:9.4px;color:#1a1a1a;font-family:'DejaVu Sans', sans-serif;transform-origin:50% 50%;transform:scaleX(0.9885);">0</span>
<span id="t87" class="t" style="-webkit-text-stroke:0.2px;left:451.55px;top:414.00px;font-size:9.4px;line-height:9.4px;color:#1a1a1a;font-family:'DejaVu Sans', sans-serif;transform-origin:50% 50%;transform:scaleX(0.9494);">500</span>
<span id="t88" class="t" style="-webkit-text-stroke:0.2px;left:502.27px;top:414.00px;font-size:9.4px;line-height:9.4px;color:#1a1a1a;font-family:'DejaVu Sans', sans-serif;transform-origin:50% 50%;transform:scaleX(0.9472);">1000</span>
<span id="t89" class="t" style="-webkit-text-stroke:0.2px;left:555.87px;top:414.00px;font-size:9.4px;line-height:9.4px;color:#1a1a1a;font-family:'DejaVu Sans', sans-serif;transform-origin:50% 50%;transform:scaleX(0.9472);">1500</span>
<span id="t90" class="t" style="-webkit-text-stroke:0.2px;left:609.27px;top:414.00px;font-size:9.4px;line-height:9.4px;color:#1a1a1a;font-family:'DejaVu Sans', sans-serif;transform-origin:50% 50%;transform:scaleX(0.9472);">2000</span>
<span id="t91" class="t" style="-webkit-text-stroke:0.2px;left:522.4px;top:149.00px;font-size:10.7px;line-height:10.7px;color:#1a1a1a;font-family:'DejaVu Sans', sans-serif;transform:scaleX(1.0169);">Max Water Level</span>
<span id="t92" class="t" style="-webkit-text-stroke:0.2px;left:522.4px;top:164.00px;font-size:10.7px;line-height:10.7px;color:#1a1a1a;font-family:'DejaVu Sans', sans-serif;transform:scaleX(1.0131);">Bed Level</span>
</div>
</body>
</html>
